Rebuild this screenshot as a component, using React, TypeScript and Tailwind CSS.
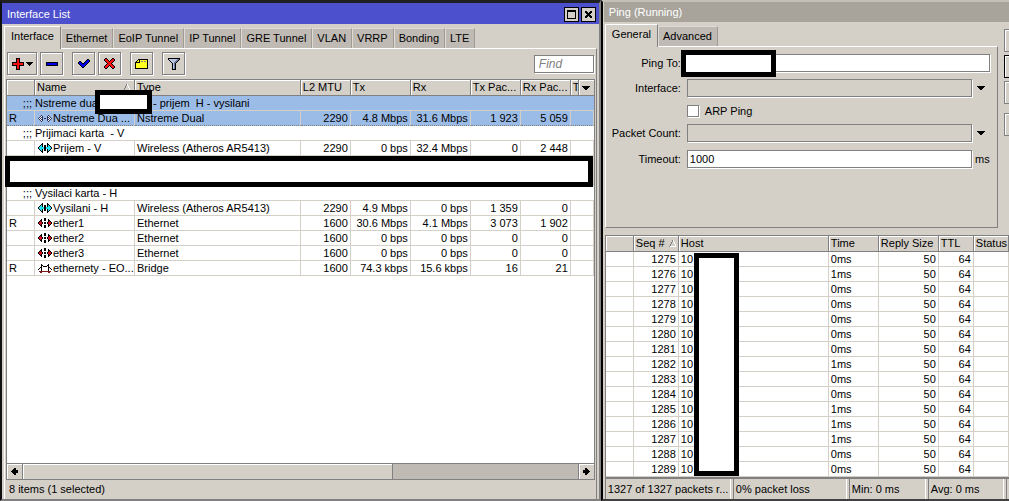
import React from "react";

type Palette = Record<string, string>;

const palette: Palette = {
  k: "#000000",
  c: "#22e0f0",
  r: "#d01020",
  w: "#ffffff",
  b: "#0000e8",
  R: "#f81010",
  g: "#808080",
  m: "#801818",
  n: "#303060",
  y: "#ffff20",
  l: "#b8c4e0",
  d: "#6878a8",
};

/** Small bitmap icon, one character for each pixel. */
function Bitmap({ rows }: { rows: string[] }) {
  const width = Math.max(...rows.map((r) => r.length));
  return (
    <svg
      width={width}
      height={rows.length}
      viewBox={`0 0 ${width} ${rows.length}`}
      shapeRendering="crispEdges"
      className="shrink-0"
      aria-hidden="true"
    >
      {rows.flatMap((row, y) =>
        row.split("").map((ch, x) =>
          palette[ch] ? <rect key={`${x}-${y}`} x={x} y={y} width="1" height="1" fill={palette[ch]} /> : null,
        ),
      )}
    </svg>
  );
}

const icons = {
  dual: [
    "...n......n...",
    "..nwn....nwn..",
    ".nwnn....nnwn.",
    "nwnwn.nn.nwnwn",
    ".nwnn....nnwn.",
    "..nwn....nwn..",
    "...n......n...",
  ],
  wireless: [
    "....k....k....",
    "...kk....kk...",
    "..kck.kk.kck..",
    ".kcck.kk.kcck.",
    "kccccckkccccck",
    "kccccckkccccck",
    ".kcck.kk.kcck.",
    "..kck.kk.kck..",
    "...kk....kk...",
    "....k....k....",
  ],
  ethernet: [
    "......kk......",
    "...k..kk..k...",
    "..kk..kk..kk..",
    ".krk......krk.",
    "krrrk.kk.krrrk",
    "krrrk.kk.krrrk",
    ".krk......krk.",
    "..kk..kk..kk..",
    "...k..kk..k...",
    "......kk......",
  ],
  bridge: [
    "...k......k...",
    "...kk....kk...",
    "...k.kkkk.k...",
    "..kk......kk..",
    ".k.k......k.k.",
    "k..k......k..k",
    "...k......k...",
    ".mmmmmmmmmmmm.",
    "..mm......mm..",
  ],
  plus: [
    "....kkkk....",
    "....kRRk....",
    "....kRRk....",
    "....kRRk....",
    "kkkkkRRkkkkk",
    "kRRRRRRRRRRk",
    "kRRRRRRRRRRk",
    "kkkkkRRkkkkk",
    "....kRRk....",
    "....kRRk....",
    "....kRRk....",
    "....kkkk....",
  ],
  minus: ["kkkkkkkkkkkk", "kbbbbbbbbbbk", "kbbbbbbbbbbk", "kkkkkkkkkkkk"],
  check: [
    ".........kk.",
    "........kbbk",
    ".kk....kbbbk",
    "kbbk..kbbbk.",
    "kbbbkkbbbk..",
    ".kbbbbbbk...",
    "..kbbbbk....",
    "...kbbk.....",
    "....kk......",
  ],
  cross: [
    ".kk.....kk.",
    "kRRk...kRRk",
    "kRRRk.kRRRk",
    ".kRRRkRRRk.",
    "..kRRRRRk..",
    "...kRRRk...",
    "..kRRRRRk..",
    ".kRRRkRRRk.",
    "kRRRk.kRRRk",
    "kRRk...kRRk",
    ".kk.....kk.",
  ],
  note: [
    "...kkkkkkkkkk",
    "..kykyyyyyyyk",
    ".kyykyggyggyk",
    "kkkkkyyyyyyyk",
    "kyyyyyyyyyyyk",
    "kyyyyyyyyyyyk",
    "kyyyyyyyyyyyk",
    "kyyyyyyyyyyyk",
    "kyyyyyyyyyyyk",
    "kkkkkkkkkkkkk",
  ],
  filter: [
    "kkkkkkkkkkkk",
    "kllllllllddk",
    ".klllllldgk.",
    "..kllllddk..",
    "...klldgk...",
    "....kldk....",
    "....kldk....",
    "....kldk....",
    "....kldk....",
    "....kldk....",
    "....kldk....",
    "....kkkk....",
  ],
  caret: ["kkkkkkkk", ".kkkkkk.", "..kkkk..", "...kk..."],
  smallCaret: ["kkkkkkk", ".kkkkk.", "..kkk..", "...k..."],
  sort: ["...gw..", "...gw..", "..g..w.", "..g..w.", ".g....w", ".g....w", "gwwwwww"],
  left: ["...kk..", "..kkk..", ".kkkkkk", "kkkkkkk", ".kkkkkk", "..kkk..", "...kk.."],
  right: ["..kk...", "..kkk..", "kkkkkk.", "kkkkkkk", "kkkkkk.", "..kkk..", "..kk..."],
  maximize: [
    "kkkkkkkkk",
    "kkkkkkkkk",
    "k.......k",
    "k.......k",
    "k.......k",
    "k.......k",
    "k.......k",
    "k.......k",
    "kkkkkkkkk",
  ],
  close: ["kk...kk", "kkk.kkk", ".kkkkk.", "..kkk..", ".kkkkk.", "kkk.kkk", "kk...kk"],
};

type IconName = keyof typeof icons;

type Row =
  | { kind: "comment"; text: string; selected?: boolean }
  | { kind: "blank" }
  | { kind: "item"; flag: string; icon: IconName; name: string; cells: string[]; selected?: boolean };

const rows: Row[] = [
  { kind: "comment", text: "Nstreme dual", selected: true },
  {
    kind: "item",
    flag: "R",
    icon: "dual",
    name: "Nstreme Dua ...",
    cells: ["Nstreme Dual", "2290", "4.8 Mbps", "31.6 Mbps", "1 923", "5 059"],
    selected: true,
  },
  { kind: "comment", text: "Prijimaci karta  - V" },
  {
    kind: "item",
    flag: "",
    icon: "wireless",
    name: "Prijem - V",
    cells: ["Wireless (Atheros AR5413)", "2290", "0 bps", "32.4 Mbps", "0", "2 448"],
  },
  { kind: "blank" },
  { kind: "blank" },
  { kind: "comment", text: "Vysilaci karta - H" },
  {
    kind: "item",
    flag: "",
    icon: "wireless",
    name: "Vysilani - H",
    cells: ["Wireless (Atheros AR5413)", "2290", "4.9 Mbps", "0 bps", "1 359", "0"],
  },
  {
    kind: "item",
    flag: "R",
    icon: "ethernet",
    name: "ether1",
    cells: ["Ethernet", "1600", "30.6 Mbps", "4.1 Mbps", "3 073", "1 902"],
  },
  { kind: "item", flag: "", icon: "ethernet", name: "ether2", cells: ["Ethernet", "1600", "0 bps", "0 bps", "0", "0"] },
  { kind: "item", flag: "", icon: "ethernet", name: "ether3", cells: ["Ethernet", "1600", "0 bps", "0 bps", "0", "0"] },
  {
    kind: "item",
    flag: "R",
    icon: "bridge",
    name: "ethernety - EO...",
    cells: ["Bridge", "1600", "74.3 kbps", "15.6 kbps", "16", "21"],
  },
];

const pings = [
  [1275, "0ms"],
  [1276, "1ms"],
  [1277, "0ms"],
  [1278, "0ms"],
  [1279, "0ms"],
  [1280, "0ms"],
  [1281, "0ms"],
  [1282, "1ms"],
  [1283, "0ms"],
  [1284, "0ms"],
  [1285, "1ms"],
  [1286, "1ms"],
  [1287, "1ms"],
  [1288, "0ms"],
  [1289, "0ms"],
] as const;

const headClass =
  "h-4 overflow-hidden whitespace-nowrap border-r border-b border-[#808080] bg-[#d4d0c8] px-0.5 text-left font-normal shadow-[inset_1px_1px_0_#fff]";
const cellClass = "h-[15px] overflow-hidden whitespace-nowrap border-r border-b border-[#d4d0c8] px-0.5 leading-[14px]";

function Tab({ label, active }: { label: string; active?: boolean }) {
  return (
    <button
      role="tab"
      aria-selected={!!active}
      className={
        active
          ? "-mb-px h-[23px] border-t border-r border-l border-t-white border-r-[#808080] border-l-white bg-[#d4d0c8] px-1.5 pb-1 whitespace-nowrap"
          : "h-5 border-t border-r border-t-[#dedad4] border-r-[#a09c94] bg-[#bfbab3] px-[5px] whitespace-nowrap shadow-[inset_1px_0_0_#dedad4]"
      }
    >
      {label}
    </button>
  );
}

function ToolButton({ label, icon, wide }: { label: string; icon: IconName; wide?: boolean }) {
  return (
    <button
      aria-label={label}
      className={`flex h-[23px] items-center justify-center border border-[#808080] shadow-[1px_1px_0_#fff,inset_1px_1px_0_#fff] ${
        wide ? "w-[30px] gap-0.5" : "w-[23px]"
      }`}
    >
      <Bitmap rows={icons[icon]} />
      {wide && <Bitmap rows={icons.smallCaret} />}
    </button>
  );
}

function InterfaceList() {
  return (
    <section className="flex min-w-0 flex-[601] flex-col border-2 border-t-[3px] border-t-[#202020] border-r-[#808080] border-b-[#808080] border-l-[#101010] bg-[#d4d0c8]">
      <header className="flex h-[21px] shrink-0 items-center gap-0.5 bg-[#4c50cc] pt-px pr-[3px] pl-[5px] text-white">
        <h1 className="grow">Interface List</h1>
        <button aria-label="Maximize" className="flex size-[15px] items-center justify-center border border-black bg-[#d4d0c8]">
          <Bitmap rows={icons.maximize} />
        </button>
        <button aria-label="Close" className="flex size-[15px] items-center justify-center border border-black bg-[#d4d0c8]">
          <Bitmap rows={icons.close} />
        </button>
      </header>
      <div role="tablist" className="relative mt-0.5 ml-0.5 flex h-[22px] shrink-0 items-end">
        {["Interface", "Ethernet", "EoIP Tunnel", "IP Tunnel", "GRE Tunnel", "VLAN", "VRRP", "Bonding", "LTE"].map(
          (label, i) => (
            <Tab key={label} label={label} active={i === 0} />
          ),
        )}
      </div>
      <div className="mr-0.5 ml-0.5 flex min-h-0 grow flex-col border-t border-r border-l border-t-white border-r-[#808080] border-l-white px-px">
        <div className="flex h-[30px] shrink-0 items-center gap-[3px] pb-px pl-px">
          <ToolButton label="Add" icon="plus" wide />
          <ToolButton label="Remove" icon="minus" />
          <span className="w-[3px]" />
          <ToolButton label="Enable" icon="check" />
          <ToolButton label="Disable" icon="cross" />
          <span className="w-[3px]" />
          <ToolButton label="Comment" icon="note" />
          <span className="w-[3px]" />
          <ToolButton label="Filter" icon="filter" />
          <input
            aria-label="Find"
            placeholder="Find"
            className="mr-px ml-auto h-[18px] w-[60px] border border-[#808080] bg-white px-1 text-xs italic shadow-[1px_1px_0_#fff] placeholder:text-[#808080]"
          />
        </div>
        <div className="relative flex min-h-0 grow flex-col border border-[#808080] bg-white">
          <table className="w-full table-fixed border-separate border-spacing-0">
            <colgroup>
              <col className="w-7" />
              <col className="w-[100px]" />
              <col />
              <col className="w-[50px]" />
              <col className="w-[60px]" />
              <col className="w-[60px]" />
              <col className="w-[50px]" />
              <col className="w-[50px]" />
              <col className="w-2" />
              <col className="w-[15px]" />
            </colgroup>
            <thead>
              <tr>
                <th className={headClass} />
                <th className={headClass}>
                  <div className="flex items-center justify-between pr-0.5">
                    Name
                    <Bitmap rows={icons.sort} />
                  </div>
                </th>
                {["Type", "L2 MTU", "Tx", "Rx", "Tx Pac...", "Rx Pac...", "T"].map((h) => (
                  <th key={h} className={headClass}>
                    {h}
                  </th>
                ))}
                <th className="h-4 border-b border-[#808080] bg-[#d4d0c8] p-0 shadow-[inset_1px_1px_0_#fff]">
                  <button aria-label="Columns" className="flex w-full justify-center">
                    <Bitmap rows={icons.caret} />
                  </button>
                </th>
              </tr>
            </thead>
            <tbody>
              {rows.map((row, i) => {
                if (row.kind === "blank") {
                  return (
                    <tr key={i}>
                      <td colSpan={10} className={cellClass} />
                    </tr>
                  );
                }
                if (row.kind === "comment") {
                  return (
                    <tr key={i} className={row.selected ? "bg-[#9cbce8]" : ""}>
                      <td colSpan={10} className="h-[15px] border-b border-[#d4d0c8] p-0 leading-[14px] whitespace-pre">
                        <div className="flex">
                          <span className="w-7 pr-[3px] text-right">;;;</span>
                          <span className={row.selected ? "w-[118px]" : ""}>{row.text}</span>
                          {row.selected && <span>- prijem  H - vysilani</span>}
                        </div>
                      </td>
                    </tr>
                  );
                }
                const line = row.selected ? " border-b-[#808080] [border-bottom-style:dotted]" : "";
                return (
                  <tr key={i} className={row.selected ? "bg-[#9cbce8]" : ""}>
                    <td className={cellClass + line}>{row.flag}</td>
                    <td className={cellClass + line}>
                      <div className="flex h-3.5 items-center gap-px pl-px">
                        <Bitmap rows={icons[row.icon]} />
                        {row.name}
                      </div>
                    </td>
                    {row.cells.map((cell, j) => (
                      <td key={j} className={cellClass + line + (j > 0 ? " text-right" : "")}>
                        {cell}
                      </td>
                    ))}
                    <td colSpan={2} className={cellClass + line} />
                  </tr>
                );
              })}
            </tbody>
          </table>
          <div className="absolute top-[10px] left-[88px] h-6 w-[57px] border-[5px] border-black bg-white" />
          <div className="absolute top-[76px] right-px -left-0.5 h-[31px] border-[5px] border-black bg-white" />
          <div className="mt-auto flex h-4 shrink-0 border-t border-[#808080] bg-[#bfbab3]">
            <button
              aria-label="Scroll left"
              className="flex w-4 items-center justify-center border-r border-[#808080] bg-[#d4d0c8] shadow-[inset_1px_1px_0_#fff]"
            >
              <Bitmap rows={icons.left} />
            </button>
            <div className="grow">
              <div className="h-full w-2/3 border-r border-[#808080] bg-[#d4d0c8] shadow-[inset_1px_1px_0_#fff]" />
            </div>
            <button
              aria-label="Scroll right"
              className="flex w-4 items-center justify-center border-l border-[#808080] bg-[#d4d0c8] shadow-[inset_1px_1px_0_#fff]"
            >
              <Bitmap rows={icons.right} />
            </button>
          </div>
        </div>
        <footer className="flex h-[19px] shrink-0 items-center pb-px pl-[3px]">8 items (1 selected)</footer>
      </div>
    </section>
  );
}

const fieldClass = "h-[18px] min-w-0 grow rounded-none border border-[#808080] px-0.5 shadow-[1px_1px_0_#fff]";

function PingWindow() {
  return (
    <section className="flex min-w-0 flex-[408] flex-col overflow-hidden border-t-2 border-b-2 border-l-2 border-t-[#c4c0b8] border-b-[#404040] border-l-black bg-[#d4d0c8] pl-px">
      <header className="flex h-5 shrink-0 items-center bg-[#a8a49c] pt-px pl-[5px] text-white">
        <h2>Ping (Running)</h2>
      </header>
      <div className="flex shrink-0">
        <div className="ml-px min-w-0 grow">
          <div role="tablist" className="relative mt-0.5 flex h-[22px] items-end">
            <Tab label="General" active />
            <Tab label="Advanced" />
          </div>
          <form className="grid h-[182px] grid-cols-[75px_1fr] content-start gap-x-1.5 border border-t-white border-r-[#808080] border-b-[#808080] border-l-white pt-[7px] pr-[7px]">
            <label htmlFor="ping-to" className="self-center text-right">
              Ping To:
            </label>
            <div className="relative flex">
              <input id="ping-to" className={fieldClass + " bg-white"} />
              <div className="absolute -top-1 -left-1.5 h-[27px] w-[95px] border-[5px] border-black bg-white" />
            </div>
            <label htmlFor="interface" className="mt-[7px] self-center text-right">
              Interface:
            </label>
            <div className="mt-[7px] flex items-center">
              <select id="interface" className={fieldClass + " appearance-none bg-[#d4d0c8]"} />
              <span className="flex w-[18px] justify-center">
                <Bitmap rows={icons.caret} />
              </span>
            </div>
            <span />
            <label className="mt-2 flex h-3 items-center gap-1.5">
              <input type="checkbox" className="size-3 appearance-none border border-[#808080] bg-white shadow-[1px_1px_0_#fff]" />
              ARP Ping
            </label>
            <label htmlFor="count" className="mt-[7px] self-center text-right">
              Packet Count:
            </label>
            <div className="mt-[7px] flex items-center">
              <select id="count" className={fieldClass + " appearance-none bg-[#d4d0c8]"} />
              <span className="flex w-[18px] justify-center">
                <Bitmap rows={icons.caret} />
              </span>
            </div>
            <label htmlFor="timeout" className="mt-2 self-center text-right">
              Timeout:
            </label>
            <div className="mt-2 flex items-center">
              <input id="timeout" defaultValue="1000" className={fieldClass + " bg-white"} />
              <span className="w-[18px] pl-[3px]">ms</span>
            </div>
          </form>
        </div>
        <div className="ml-1.5 flex w-[5px] flex-col gap-[3px] pt-[7px]">
          <button aria-label="Start" className="h-[23px] border border-r-0 border-[#808080] shadow-[inset_1px_1px_0_#fff]" />
          <button aria-label="Stop" className="h-[23px] border border-r-0 border-black shadow-[inset_1px_1px_0_#fff]" />
          <button aria-label="Close" className="h-[23px] border border-r-0 border-[#808080] shadow-[inset_1px_1px_0_#fff]" />
          <button aria-label="New Window" className="mt-1.5 h-[23px] border border-r-0 border-[#808080] shadow-[inset_1px_1px_0_#fff]" />
        </div>
      </div>
      <div className="relative mt-[7px] ml-px border-t border-l border-[#808080] bg-white">
        <table className="w-full table-fixed border-separate border-spacing-0">
          <colgroup>
            <col className="w-7" />
            <col className="w-[45px]" />
            <col className="w-[150px]" />
            <col className="w-[50px]" />
            <col className="w-[60px]" />
            <col className="w-[35px]" />
            <col />
          </colgroup>
          <thead>
            <tr>
              <th className={headClass} />
              <th className={headClass}>
                <div className="flex items-center justify-between">
                  Seq #
                  <Bitmap rows={icons.sort} />
                </div>
              </th>
              {["Host", "Time", "Reply Size", "TTL", "Status"].map((h) => (
                <th key={h} className={headClass}>
                  {h}
                </th>
              ))}
            </tr>
          </thead>
          <tbody>
            {pings.map(([seq, time]) => (
              <tr key={seq}>
                <td className={cellClass} />
                <td className={cellClass + " text-right"}>{seq}</td>
                <td className={cellClass}>10</td>
                <td className={cellClass}>{time}</td>
                <td className={cellClass + " text-right"}>50</td>
                <td className={cellClass + " text-right"}>64</td>
                <td className={cellClass} />
              </tr>
            ))}
          </tbody>
        </table>
        <div className="absolute top-[17px] left-[88px] h-[223px] w-[45px] border-[5px] border-black bg-white" />
      </div>
      <footer className="ml-px flex min-h-0 grow gap-0.5 overflow-hidden border-t-2 border-[#808080] whitespace-nowrap">
        <div className="flex w-[126px] shrink-0 items-center border-r border-l border-r-white border-l-[#808080] pl-0.5">
          1327 of 1327 packets r...
        </div>
        <div className="flex w-[114px] shrink-0 items-center border-r border-l border-r-white border-l-[#808080] pl-0.5">
          0% packet loss
        </div>
        <div className="flex w-[77px] shrink-0 items-center border-r border-l border-r-white border-l-[#808080] pl-0.5">
          Min: 0 ms
        </div>
        <div className="flex w-[76px] shrink-0 items-center border-r border-l border-r-white border-l-[#808080] pl-0.5">
          Avg: 0 ms
        </div>
        <div className="grow border-l border-[#808080]" />
      </footer>
    </section>
  );
}

export default function App() {
  return (
    <main className="flex h-screen min-h-[501px] bg-[#d4d0c8] font-['Liberation_Sans',Arial,sans-serif] text-[11px] leading-[15px] text-black">
      <InterfaceList />
      <PingWindow />
    </main>
  );
}
